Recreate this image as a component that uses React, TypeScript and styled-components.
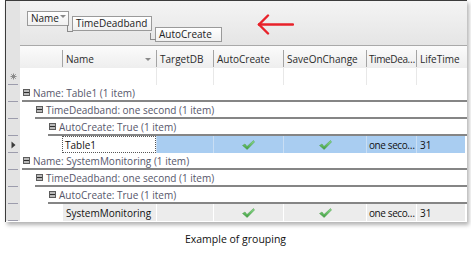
import React from 'react';
import styled, { createGlobalStyle } from 'styled-components';

const Global = createGlobalStyle`
  html, body { margin: 0; padding: 0; background: #fff; }
  body { font-family: "Open Sans", "Liberation Sans", sans-serif; }
  * { box-sizing: border-box; }
`;

const Page = styled.div`
  width: 471px;
  height: 260px;
  display: flex;
  flex-direction: column;
`;

const Frame = styled.div`
  margin-left: 5px;
  width: 462px;
  height: 222px;
  border-top: 1px solid #3c3c3c;
  border-left: 1px solid #3c3c3c;
  background: #fff;
  box-shadow: 2px 3px 4px rgba(0, 0, 0, 0.3);
  display: flex;
  flex-direction: column;
  overflow: hidden;
`;

const Line = styled.div<{ $h: number }>`
  display: flex;
  height: ${(p) => p.$h}px;
  flex: none;
`;

const Indicator = styled.div<{ $dash?: boolean }>`
  width: 14px;
  flex: none;
  background: #e3e3e3;
  position: relative;
  display: flex;
  align-items: center;
  justify-content: center;
  &::after {
    content: '';
    display: ${(p) => (p.$dash ? 'block' : 'none')};
    position: absolute;
    left: 2px;
    right: 2px;
    bottom: 0;
    height: 1px;
    background: #9c9cac;
  }
`;

const GroupPanel = styled.div`
  flex: 1;
  display: flex;
  align-items: flex-start;
  padding-left: 7px;
  background: linear-gradient(#f4f4f4, #e5e5e5);
  border-bottom: 1px solid #a9a9a9;
`;

const Chip = styled.div<{ $top: number; $link?: boolean; $wide: number }>`
  position: relative;
  margin-top: ${(p) => p.$top}px;
  margin-right: 3px;
  width: ${(p) => p.$wide}px;
  height: 15px;
  padding-left: 3px;
  border: 1px solid #9a9a9a;
  background: linear-gradient(#ffffff, #f0f0f0);
  font-size: 10px;
  line-height: 13px;
  color: #222;
  display: flex;
  align-items: flex-start;
  justify-content: space-between;
  white-space: nowrap;
  &::before {
    content: '';
    display: ${(p) => (p.$link ? 'block' : 'none')};
    position: absolute;
    left: -6px;
    top: ${(p) => (p.$top > 20 ? 5 : 8)}px;
    width: 5px;
    height: 6px;
    border-left: 1px solid #8a8a8a;
    border-bottom: 1px solid #8a8a8a;
  }
`;

const ChipCaret = styled.span`
  width: 0;
  height: 0;
  margin: 3px 2px 0 0;
  border-left: 3px solid transparent;
  border-right: 3px solid transparent;
  border-top: 3px solid #8a8a8a;
`;

const Arrow = styled.svg`
  margin-top: 13px;
  margin-left: 32px;
  flex: none;
`;

const Header = styled.div`
  flex: 1;
  display: flex;
  background: linear-gradient(#fbfbfb, #eeeeee);
`;

const Indent = styled.div`
  width: 42px;
  flex: none;
`;

const HeadCell = styled.div<{ $w: number; $tight?: boolean }>`
  width: ${(p) => p.$w}px;
  flex: none;
  position: relative;
  padding: 5px ${(p) => (p.$tight ? '0 0 3px' : '4px 0 4px')};
  font-size: 10px;
  line-height: 17px;
  letter-spacing: ${(p) => (p.$tight ? '-0.4px' : '0')};
  color: #2a2a2a;
  white-space: nowrap;
  overflow: hidden;
  display: flex;
  justify-content: space-between;
  align-items: center;
  &::before {
    content: '';
    position: absolute;
    left: 0;
    top: 4px;
    bottom: 1px;
    width: 1px;
    background: #a4a4a4;
  }
`;

const SortCaret = styled.span`
  width: 0;
  height: 0;
  margin-right: 1px;
  border-left: 3px solid transparent;
  border-right: 3px solid transparent;
  border-top: 3px solid #8a8a8a;
`;

const Body = styled.div`
  flex: 1;
  display: flex;
`;

type Tone = 'blank' | 'sel' | 'alt' | 'focus';

const Cell = styled.div<{ $w: number; $tone: Tone; $tight?: boolean }>`
  width: ${(p) => p.$w}px;
  flex: none;
  height: 100%;
  padding-left: ${(p) => (p.$tight ? 2 : 3)}px;
  font-size: 10px;
  letter-spacing: ${(p) => (p.$tight ? '-0.4px' : '0')};
  color: #111;
  white-space: nowrap;
  overflow: hidden;
  display: flex;
  align-items: center;
  background: ${(p) =>
    p.$tone === 'sel' ? '#a9cdf1' : p.$tone === 'alt' ? '#ececec' : '#fff'};
  border-left: 1px solid
    ${(p) =>
      p.$tone === 'sel'
        ? '#c9def4'
        : p.$tone === 'alt'
        ? '#ffffff'
        : '#e8e8e8'};
  ${(p) =>
    p.$tone === 'focus'
      ? 'border: 1px dotted #555; padding-left: 2px;'
      : ''}
`;

const CheckCell = styled(Cell)`
  justify-content: center;
  padding-left: 0;
`;

const GroupBar = styled.div<{ $level: number }>`
  flex: 1;
  margin-left: ${(p) => 2 + 13 * (p.$level - 1)}px;
  border-bottom: 2px solid #858585;
  display: flex;
  align-items: center;
  gap: 3px;
  padding-left: 1px;
  font-size: 10px;
  color: #56566a;
  white-space: nowrap;
`;

const Toggle = styled.span`
  width: 7px;
  height: 7px;
  flex: none;
  border: 1px solid #5c5c5c;
  background: #b9b9b9;
  display: flex;
  align-items: center;
  justify-content: center;
  &::after {
    content: '';
    width: 5px;
    height: 1px;
    background: #2e2e2e;
  }
`;

const Caption = styled.div`
  margin-top: 10px;
  text-align: center;
  font-size: 10.5px;
  color: #111;
`;

const cols = [
  { key: 'Name', w: 94 },
  { key: 'TargetDB', w: 57 },
  { key: 'AutoCreate', w: 70 },
  { key: 'SaveOnChange', w: 83 },
  { key: 'TimeDea…', w: 50, tight: true },
  { key: 'LifeTime', w: 49 },
];

const Check = () => (
  <svg width="13" height="10" viewBox="0 0 13 10">
    <defs>
      <linearGradient id="ck" x1="0" y1="0" x2="0" y2="1">
        <stop offset="0" stopColor="#8fe08f" />
        <stop offset="1" stopColor="#3c9c3c" />
      </linearGradient>
    </defs>
    <path d="M0.5 5.5 L3 4 L5 6.5 L11.5 0.5 L12.5 2 L5.2 9.5 Z" fill="url(#ck)" stroke="#4a9a4a" strokeWidth="0.5" />
  </svg>
);

const Star = () => (
  <svg width="7" height="7" viewBox="0 0 7 7">
    <g stroke="#8a8a8a" strokeWidth="1">
      <line x1="3.5" y1="0.5" x2="3.5" y2="6.5" />
      <line x1="0.5" y1="3.5" x2="6.5" y2="3.5" />
      <line x1="1.3" y1="1.3" x2="5.7" y2="5.7" />
      <line x1="5.7" y1="1.3" x2="1.3" y2="5.7" />
    </g>
  </svg>
);

const Pointer = () => (
  <svg width="5" height="8" viewBox="0 0 5 8">
    <path d="M0.5 0.5 L4.5 4 L0.5 7.5 Z" fill="#3a3a3a" />
  </svg>
);

type Row =
  | { kind: 'group'; level: number; text: string }
  | { kind: 'data'; name: string; selected: boolean };

const rows: Row[] = [
  { kind: 'group', level: 1, text: 'Name: Table1 (1 item)' },
  { kind: 'group', level: 2, text: 'TimeDeadband: one second (1 item)' },
  { kind: 'group', level: 3, text: 'AutoCreate: True (1 item)' },
  { kind: 'data', name: 'Table1', selected: true },
  { kind: 'group', level: 1, text: 'Name: SystemMonitoring (1 item)' },
  { kind: 'group', level: 2, text: 'TimeDeadband: one second (1 item)' },
  { kind: 'group', level: 3, text: 'AutoCreate: True (1 item)' },
  { kind: 'data', name: 'SystemMonitoring', selected: false },
];

export default function App() {
  return (
    <Page>
      <Global />
      <Frame>
        <Line $h={45}>
          <Indicator />
          <GroupPanel>
            <Chip $top={10} $wide={42}>
              Name
              <ChipCaret />
            </Chip>
            <Chip $top={15} $wide={80} $link>
              TimeDeadband
            </Chip>
            <Chip $top={26} $wide={67} $link>
              AutoCreate
            </Chip>
            <Arrow width="37" height="21" viewBox="0 0 37 21">
              <g stroke="#e8222a" strokeWidth="2.4" strokeLinecap="round" fill="none">
                <line x1="2" y1="10.5" x2="36" y2="10.5" />
                <line x1="2" y1="10.5" x2="11" y2="1.5" />
                <line x1="2" y1="10.5" x2="11" y2="19.5" />
              </g>
            </Arrow>
          </GroupPanel>
        </Line>
        <Line $h={22}>
          <Indicator />
          <Header>
            <Indent />
            {cols.map((c) => (
              <HeadCell key={c.key} $w={c.w} $tight={c.tight}>
                {c.key}
                {c.key === 'Name' && <SortCaret />}
              </HeadCell>
            ))}
          </Header>
        </Line>
        <Line $h={17}>
          <Indicator $dash>
            <Star />
          </Indicator>
          <Body>
            <Indent />
            <Cell $w={94} $tone="blank" style={{ borderLeftColor: '#fff' }} />
            {cols.slice(1).map((c) => (
              <Cell key={c.key} $w={c.w} $tone="blank" />
            ))}
          </Body>
        </Line>
        {rows.map((r, i) =>
          r.kind === 'group' ? (
            <Line $h={17} key={i}>
              <Indicator $dash />
              <GroupBar $level={r.level}>
                <Toggle />
                {r.text}
              </GroupBar>
            </Line>
          ) : (
            <Line $h={17} key={i}>
              <Indicator $dash>{r.selected && <Pointer />}</Indicator>
              <Body>
                <Indent />
                <Cell $w={94} $tone={r.selected ? 'focus' : 'alt'}>
                  {r.name}
                </Cell>
                <Cell $w={57} $tone={r.selected ? 'sel' : 'alt'} />
                <CheckCell $w={70} $tone={r.selected ? 'sel' : 'alt'}>
                  <Check />
                </CheckCell>
                <CheckCell $w={83} $tone={r.selected ? 'sel' : 'alt'}>
                  <Check />
                </CheckCell>
                <Cell $w={50} $tone={r.selected ? 'sel' : 'alt'} $tight>
                  one seco…
                </Cell>
                <Cell $w={49} $tone={r.selected ? 'sel' : 'alt'}>
                  31
                </Cell>
              </Body>
            </Line>
          )
        )}
      </Frame>
      <Caption>Example of grouping</Caption>
    </Page>
  );
}
